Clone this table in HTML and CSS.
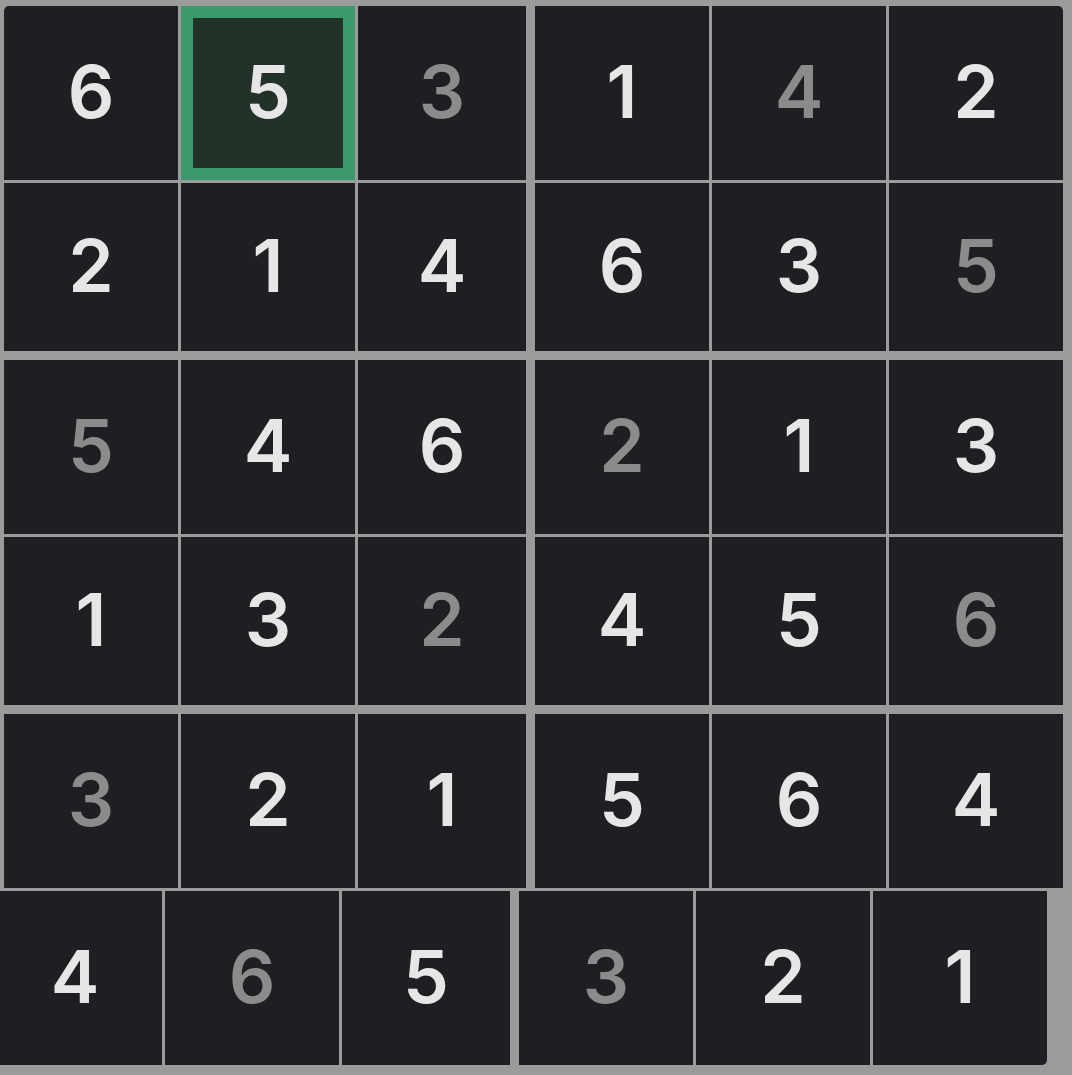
FILE: index.html
```html
<!DOCTYPE html>
<html lang="en">
<head>
<meta charset="utf-8">
<title>Sudoku 6x6</title>
<link rel="stylesheet" href="styles.css">
</head>
<body>
<div class="board">
  <div class="row">
    <div class="cell tl">6</div>
    <div class="cell selected">5</div>
    <div class="cell sep-r dim">3</div>
    <div class="cell">1</div>
    <div class="cell dim">4</div>
    <div class="cell tr">2</div>
  </div>
  <div class="row sep-b">
    <div class="cell">2</div>
    <div class="cell">1</div>
    <div class="cell sep-r">4</div>
    <div class="cell">6</div>
    <div class="cell">3</div>
    <div class="cell dim">5</div>
  </div>
  <div class="row">
    <div class="cell dim">5</div>
    <div class="cell">4</div>
    <div class="cell sep-r">6</div>
    <div class="cell dim">2</div>
    <div class="cell">1</div>
    <div class="cell">3</div>
  </div>
  <div class="row sep-b">
    <div class="cell">1</div>
    <div class="cell">3</div>
    <div class="cell sep-r dim">2</div>
    <div class="cell">4</div>
    <div class="cell">5</div>
    <div class="cell dim">6</div>
  </div>
  <div class="row">
    <div class="cell dim">3</div>
    <div class="cell">2</div>
    <div class="cell sep-r">1</div>
    <div class="cell">5</div>
    <div class="cell">6</div>
    <div class="cell">4</div>
  </div>
  <div class="row shifted">
    <div class="cell">4</div>
    <div class="cell dim">6</div>
    <div class="cell sep-r">5</div>
    <div class="cell dim">3</div>
    <div class="cell">2</div>
    <div class="cell br">1</div>
  </div>
</div>
</body>
</html>
```

FILE: styles.css
```css
html, body {
  margin: 0;
  padding: 0;
  background: #9b9b9b;
  overflow: hidden;
}

body {
  font-family: Inter, "Noto Sans", "DejaVu Sans", sans-serif;
}

.board {
  display: flex;
  flex-direction: column;
  gap: 3px;
  padding: 6px 0 10px 4px;
}

.row {
  display: flex;
  gap: 3px;
}

.row.shifted {
  margin-left: -16px;
}

.cell {
  box-sizing: border-box;
  flex: 0 0 174px;
  width: 174px;
  height: 174px;
  display: flex;
  align-items: center;
  justify-content: center;
  padding-bottom: 3px;
  background: #1d1f23;
  color: #e6e6e6;
  font-size: 73px;
  font-weight: 600;
  line-height: 1;
}

.cell.dim {
  color: #8b8b8b;
}

.cell.sep-r {
  border-right: 6px solid #9b9b9b;
}

.row.sep-b .cell {
  border-bottom: 6px solid #9b9b9b;
}

.cell.selected {
  background: #223229;
  border: 12px solid #3b996b;
  padding-bottom: 3px;
}

.cell.tl {
  border-top-left-radius: 5px;
}

.cell.tr {
  border-top-right-radius: 5px;
}

.cell.br {
  border-bottom-right-radius: 5px;
}
```
